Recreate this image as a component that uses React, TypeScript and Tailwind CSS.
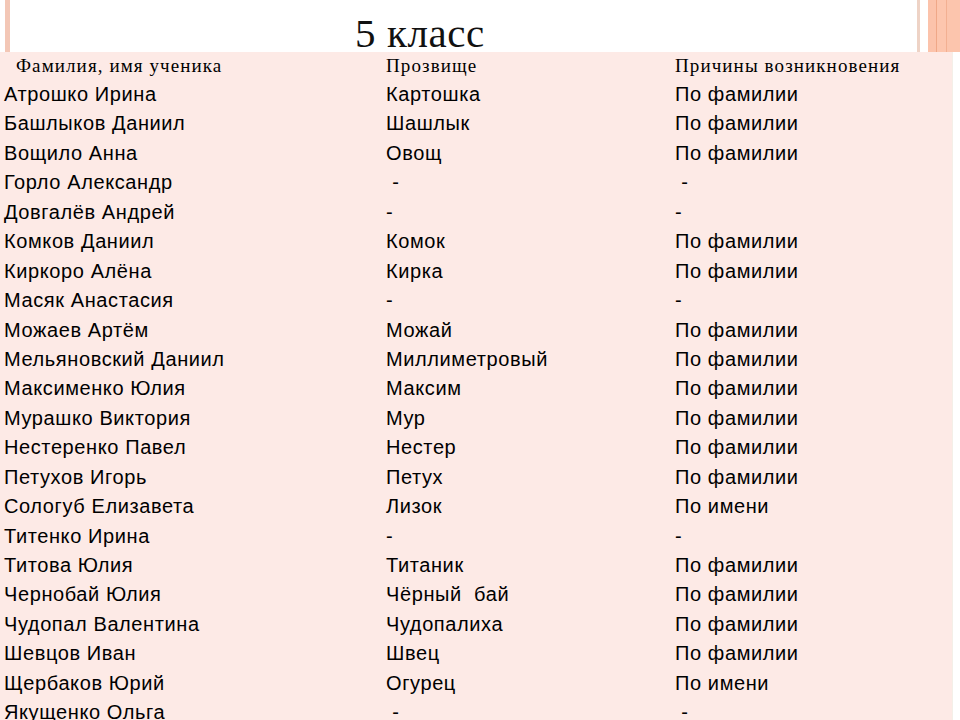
const rows: [string, string, string][] = [
  ["Атрошко Ирина", "Картошка", "По фамилии"],
  ["Башлыков Даниил", "Шашлык", "По фамилии"],
  ["Вощило Анна", "Овощ", "По фамилии"],
  ["Горло Александр", "\u00a0-", "\u00a0-"],
  ["Довгалёв Андрей", "-", "-"],
  ["Комков Даниил", "Комок", "По фамилии"],
  ["Киркоро Алёна", "Кирка", "По фамилии"],
  ["Масяк Анастасия", "-", "-"],
  ["Можаев Артём", "Можай", "По фамилии"],
  ["Мельяновский Даниил", "Миллиметровый", "По фамилии"],
  ["Максименко Юлия", "Максим", "По фамилии"],
  ["Мурашко Виктория", "Мур", "По фамилии"],
  ["Нестеренко Павел", "Нестер", "По фамилии"],
  ["Петухов Игорь", "Петух", "По фамилии"],
  ["Сологуб Елизавета", "Лизок", "По имени"],
  ["Титенко Ирина", "-", "-"],
  ["Титова Юлия", "Титаник", "По фамилии"],
  ["Чернобай Юлия", "Чёрный\u00a0 бай", "По фамилии"],
  ["Чудопал Валентина", "Чудопалиха", "По фамилии"],
  ["Шевцов Иван", "Швец", "По фамилии"],
  ["Щербаков Юрий", "Огурец", "По имени"],
  ["Якущенко Ольга", "\u00a0-", "\u00a0-"],
];

export default function App() {
  return (
    <div className="relative h-[720px] w-[960px] overflow-hidden bg-white">
      {/* decorative stripes */}
      <div className="absolute left-[5px] top-0 h-[52px] w-[5px] bg-[#f3c7b6]" />
      <div className="absolute left-[917px] top-0 h-[52px] w-[3px] bg-[#eed3c6]" />
      <div className="absolute left-[928px] top-0 flex h-[52px] w-[32px]">
        <div className="w-[8px] bg-[#fcc3ab]" />
        <div className="w-[1px] bg-[#f0a888]" />
        <div className="w-[9px] bg-[#fdc6ae]" />
        <div className="w-[1px] bg-[#f3b092]" />
        <div className="w-[13px] bg-[#fcc5ad]" />
      </div>

      <div className="h-[52px] pl-[355px] pt-[17px]">
        <h1 className="text-[41px] leading-[32px] tracking-[0.6px] text-[#111] font-['Liberation_Serif',serif]">
          5 класс
        </h1>
      </div>

      <div className="w-[953px] bg-[#fdeae6] border-b border-r border-[#f4efe8] text-black">
        <div className="grid h-[27px] grid-cols-[386px_289px_1fr] items-center font-['Liberation_Serif',serif] text-[19px] tracking-[1.1px]">
          <div className="pl-[16px]">Фамилия, имя ученика</div>
          <div>Прозвище</div>
          <div>Причины возникновения</div>
        </div>
        {rows.map((r, i) => (
          <div
            key={i}
            className="grid h-[29.45px] grid-cols-[386px_289px_1fr] items-center font-['Liberation_Sans',Arial,sans-serif] text-[20px] tracking-[0.6px] whitespace-pre"
          >
            <div className="pl-[4px]">{r[0]}</div>
            <div>{r[1]}</div>
            <div>{r[2]}</div>
          </div>
        ))}
      </div>
    </div>
  );
}
